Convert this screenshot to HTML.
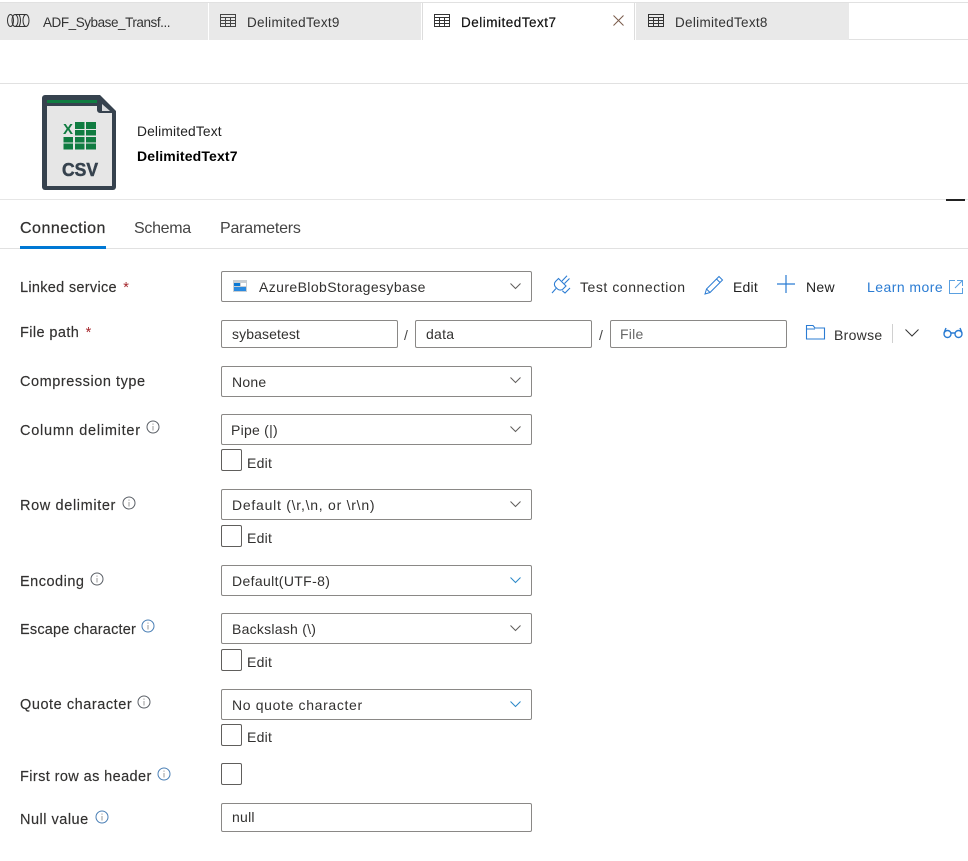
<!DOCTYPE html>
<html><head><meta charset="utf-8">
<style>
html,body{margin:0;padding:0;background:#fff}
body{width:968px;height:861px;position:relative;overflow:hidden;font-family:"Liberation Sans",sans-serif;font-size:14px;color:#262626}
.a{position:absolute;white-space:nowrap}
.l{position:absolute;left:20px;font-size:14.5px;color:#323130;white-space:nowrap;line-height:20px;-webkit-text-stroke:.15px #323130}
.b{position:absolute;box-sizing:border-box;border:1px solid #8a8886;border-radius:2px;background:#fff;height:31px;color:#323130;line-height:31px;padding-left:10px;white-space:nowrap;letter-spacing:.25px}
.c{position:absolute;box-sizing:border-box;left:221px;width:21px;height:22px;border:1px solid #605e5c;border-radius:2px}
.e{position:absolute;left:247px;color:#323130;line-height:18px;letter-spacing:.25px}
svg{position:absolute;overflow:visible}
.s{color:#a4262c;margin-left:2px;-webkit-text-stroke:0}
.t{position:absolute;top:3px;height:37px;background:#e9e9e9}
.tt{position:absolute;top:14px;line-height:18px;font-size:13.5px;color:#333;white-space:nowrap;letter-spacing:.3px}
</style></head><body>
<div class="a" style="left:0;top:2px;width:968px;height:1px;background:#e1e1e1"></div>
<div class="t" style="left:0;width:208px"></div>
<div class="t" style="left:209px;width:212px"></div>
<div class="t" style="left:422px;width:213px;background:#fff;border-left:1px solid #ddd;border-right:1px solid #ddd;box-sizing:border-box"></div>
<div class="t" style="left:636px;width:213px"></div>
<div class="a" style="left:849px;top:39px;width:119px;height:1px;background:#e1e1e1"></div>
<svg style="left:7px;top:14px" width="23" height="14" fill="none" stroke="#333" stroke-width="1"><ellipse cx="3.500" cy="6.500" rx="3" ry="6"/><ellipse cx="8" cy="6.500" rx="3" ry="6"/><path d="M8 .5H19M8 12.500H19"/><ellipse cx="19" cy="6.500" rx="3" ry="6"/><path d="M12 .5C14 4 14 9 12 12.500"/></svg>
<div class="tt" style="left:43px;letter-spacing:-.45px">ADF_Sybase_Transf...</div>
<svg style="left:220px;top:14px" width="16" height="13" fill="none" stroke="#444" stroke-width="1"><rect x=".5" y=".5" width="15" height="12"/><path d="M.5 3.500H15.500M.5 6.500H15.500M.5 9.500H15.500M5.500 3.500V12.500M10.500 3.500V12.500"/></svg>
<div class="tt" style="left:247px">DelimitedText9</div>
<svg style="left:434px;top:14px" width="16" height="13" fill="none" stroke="#333" stroke-width="1"><rect x=".5" y=".5" width="15" height="12"/><path d="M.5 3.500H15.500M.5 6.500H15.500M.5 9.500H15.500M5.500 3.500V12.500M10.500 3.500V12.500"/></svg>
<div class="tt" style="left:461px;color:#111;-webkit-text-stroke:.2px #111;letter-spacing:.5px">DelimitedText7</div>
<svg style="left:613px;top:15px" width="11" height="11" fill="none" stroke="#7a5a4a" stroke-width="1"><path d="M.5 .5L10.500 10.500M10.500 .5L.5 10.500"/></svg>
<svg style="left:648px;top:14px" width="16" height="13" fill="none" stroke="#333" stroke-width="1"><rect x=".5" y=".5" width="15" height="12"/><path d="M.5 3.500H15.500M.5 6.500H15.500M.5 9.500H15.500M5.500 3.500V12.500M10.500 3.500V12.500"/></svg>
<div class="tt" style="left:675px">DelimitedText8</div>
<div class="a" style="left:0;top:83px;width:968px;height:1px;background:#e1e1e1"></div>
<svg style="left:42px;top:95px" width="75" height="96"><path d="M3 0H58L74 16V92a3 3 0 0 1-3 3H3a3 3 0 0 1-3-3V3a3 3 0 0 1 3-3z" fill="#36424e"/><path d="M5 11H55V15a3 3 0 0 0 3 3H70V91H5z" fill="#e6e6e6"/><rect x="5" y="5" width="50" height="3" fill="#107c41"/><path d="M60 9L68 16H60z" fill="#d8dadc"/><g fill="#107c41"><rect x="33" y="27" width="9.500" height="7"/><rect x="44" y="27" width="10" height="7"/><rect x="33" y="35" width="9.500" height="5.500"/><rect x="44" y="35" width="10" height="5.500"/><rect x="21.500" y="42" width="9.500" height="5.500"/><rect x="33" y="42" width="9.500" height="5.500"/><rect x="44" y="42" width="10" height="5.500"/><rect x="21.500" y="48.500" width="9.500" height="6"/><rect x="33" y="48.500" width="9.500" height="6"/><rect x="44" y="48.500" width="10" height="6"/></g><text x="21" y="39" font-family="Liberation Sans" font-weight="700" font-size="15" fill="#107c41">X</text><text x="20" y="81" font-family="Liberation Sans" font-weight="700" font-size="18.500" textLength="36" lengthAdjust="spacingAndGlyphs" fill="#36424e" stroke="#36424e" stroke-width=".5">CSV</text></svg>
<div class="a" style="left:137px;top:124px;letter-spacing:.15px;color:#222;line-height:16px;font-size:13.800px">DelimitedText</div>
<div class="a" style="left:137px;top:148px;font-size:14px;font-weight:700;letter-spacing:.15px;color:#000;line-height:16px">DelimitedText7</div>
<div class="a" style="left:0;top:199px;width:968px;height:1px;background:#e6e6e6"></div>
<div class="a" style="left:946px;top:199px;width:19px;height:2px;background:#222"></div>
<div class="a" style="left:20px;top:219px;font-size:16px;line-height:20px;letter-spacing:.5px;color:#323130;-webkit-text-stroke:.25px #323130">Connection</div>
<div class="a" style="left:134px;top:219px;font-size:16px;line-height:20px;letter-spacing:-.3px;color:#444">Schema</div>
<div class="a" style="left:220px;top:219px;font-size:16px;line-height:20px;letter-spacing:-.2px;color:#444">Parameters</div>
<div class="a" style="left:0;top:248px;width:968px;height:1px;background:#e1e1e1"></div>
<div class="a" style="left:20px;top:246px;width:86px;height:3px;background:#0078d4"></div>

<div class="l" style="top:278px;letter-spacing:.3px">Linked service<span class="s"> *</span></div>
<div class="b" style="left:221px;top:271px;width:311px;padding-left:37px;letter-spacing:.4px">AzureBlobStoragesybase</div>
<svg style="left:233px;top:280px" width="14" height="12"><rect width="14" height="12" fill="#c8ced3"/><rect x="1" y="3" width="6" height="3" fill="#0a78d4"/><rect x="1" y="7" width="12" height="4" fill="#2a8ae0"/><rect x="8" y="3" width="5" height="3" fill="#fff"/></svg>
<svg style="left:510px;top:283px" width="11" height="7" fill="none" stroke="#605e5c"><path d="M.5 .5L5.500 5.500L10.500 .5"/></svg>

<svg style="left:551px;top:275px" width="20" height="20" fill="none" stroke="#2b7cd3" stroke-width="1.100"><path d="M7.500 3.500L15 11L12 14a4 4 0 0 1-5.500 0L4.500 12a4 4 0 0 1 0-5.500Z"/><path d="M11 6L16 .8M13.500 8.500L18.500 3.500M5 13.500L1 18M11.300 15.700L14 18L19 13"/></svg>
<div class="a" style="left:580px;top:278px;line-height:18px;letter-spacing:.55px;color:#323130">Test connection</div>
<svg style="left:704px;top:275px" width="20" height="20" fill="none" stroke="#2b7cd3"><path d="M15 1.500L18.500 5L6 17.500L1 19L2.500 14ZM12.500 4L16 7.500M2.500 14L6 17.500"/></svg>
<div class="a" style="left:733px;top:278px;line-height:18px;letter-spacing:.2px;color:#222">Edit</div>
<svg style="left:777px;top:275px" width="18" height="18" fill="none" stroke="#2b7cd3" stroke-width="1.200"><path d="M0 9H18M9 0V18"/></svg>
<div class="a" style="left:806px;top:278px;line-height:18px;letter-spacing:.3px;color:#222">New</div>
<div class="a" style="left:867px;top:278px;line-height:18px;letter-spacing:.45px;color:#2b7cd3">Learn more</div>
<svg style="left:949px;top:280px" width="14" height="14" fill="none" stroke="#5aa0e0"><path d="M6 .5H.5V13.500H13.500V8M8 .5H13.500V6M13.500 .5L6 8"/></svg>

<div class="l" style="top:323px;letter-spacing:.4px">File path<span class="s"> *</span></div>
<div class="b" style="left:221px;top:320px;width:177px;height:28px;line-height:26px;letter-spacing:.1px">sybasetest</div>
<div class="a" style="left:404px;top:326px;color:#444;line-height:18px">/</div>
<div class="b" style="left:415px;top:320px;width:177px;height:28px;line-height:26px">data</div>
<div class="a" style="left:599px;top:326px;color:#444;line-height:18px">/</div>
<div class="b" style="left:610px;top:320px;width:177px;height:28px;line-height:26px;color:#666;padding-left:9px">File</div>
<svg style="left:806px;top:325px" width="19" height="15" fill="none" stroke="#2b7cd3" stroke-width="1.100"><path d="M.5 14V.5H7L9 3H18.500V14ZM.5 4H9"/></svg>
<div class="a" style="left:834px;top:326px;line-height:18px;letter-spacing:.3px;color:#323130">Browse</div>
<div class="a" style="left:892px;top:324px;width:1px;height:19px;background:#d0d0d0"></div>
<svg style="left:905px;top:329px" width="14" height="8" fill="none" stroke="#333"><path d="M.5 .5L7 7L13.500 .5"/></svg>
<svg style="left:943px;top:326px" width="20" height="13" fill="none" stroke="#2b7cd3" stroke-width="1.400"><circle cx="4.500" cy="8" r="3.500"/><circle cx="15.500" cy="8" r="3.500"/><path d="M8 7H12M1 7L3 2M19 7L17 2"/></svg>

<div class="l" style="top:372px;letter-spacing:.55px">Compression type</div>
<div class="b" style="left:221px;top:366px;width:311px">None</div>
<svg style="left:510px;top:377px" width="11" height="7" fill="none" stroke="#605e5c"><path d="M.5 .5L5.500 5.500L10.500 .5"/></svg>

<div class="l" style="top:421px;letter-spacing:.75px">Column delimiter</div>
<svg style="left:146px;top:420px" width="14" height="14" fill="none" stroke="#5a5f66"><circle cx="7" cy="7" r="6"/><path d="M7 6V10.500M7 3.500V4.800" stroke="#999"/></svg>
<div class="b" style="left:221px;top:414px;width:311px;padding-left:9px">Pipe (|)</div>
<svg style="left:510px;top:426px" width="11" height="7" fill="none" stroke="#605e5c"><path d="M.5 .5L5.500 5.500L10.500 .5"/></svg>
<div class="c" style="top:449px"></div><div class="e" style="top:454px">Edit</div>

<div class="l" style="top:496px;letter-spacing:.63px">Row delimiter</div>
<svg style="left:122px;top:496px" width="14" height="14" fill="none" stroke="#5a5f66"><circle cx="7" cy="7" r="6"/><path d="M7 6V10.500M7 3.500V4.800" stroke="#999"/></svg>
<div class="b" style="left:221px;top:489px;width:311px;letter-spacing:.75px">Default (\r,\n, or \r\n)</div>
<svg style="left:510px;top:501px" width="11" height="7" fill="none" stroke="#605e5c"><path d="M.5 .5L5.500 5.500L10.500 .5"/></svg>
<div class="c" style="top:525px"></div><div class="e" style="top:529px">Edit</div>

<div class="l" style="top:572px;letter-spacing:.5px">Encoding</div>
<svg style="left:90px;top:572px" width="14" height="14" fill="none" stroke="#5a5f66"><circle cx="7" cy="7" r="6"/><path d="M7 6V10.500M7 3.500V4.800" stroke="#999"/></svg>
<div class="b" style="left:221px;top:565px;width:311px;letter-spacing:.35px">Default(UTF-8)</div>
<svg style="left:510px;top:577px" width="11" height="7" fill="none" stroke="#2b88c8"><path d="M.5 .5L5.500 5.500L10.500 .5"/></svg>

<div class="l" style="top:620px;letter-spacing:.2px">Escape character</div>
<svg style="left:141px;top:619px" width="14" height="14" fill="none" stroke="#4a7fb5"><circle cx="7" cy="7" r="6"/><path d="M7 6V10.500M7 3.500V4.800" stroke="#999"/></svg>
<div class="b" style="left:221px;top:613px;width:311px">Backslash (\)</div>
<svg style="left:510px;top:625px" width="11" height="7" fill="none" stroke="#605e5c"><path d="M.5 .5L5.500 5.500L10.500 .5"/></svg>
<div class="c" style="top:649px"></div><div class="e" style="top:653px">Edit</div>

<div class="l" style="top:695px;letter-spacing:.55px">Quote character</div>
<svg style="left:137px;top:695px" width="14" height="14" fill="none" stroke="#5a5f66"><circle cx="7" cy="7" r="6"/><path d="M7 6V10.500M7 3.500V4.800" stroke="#999"/></svg>
<div class="b" style="left:221px;top:689px;width:311px;letter-spacing:.65px">No quote character</div>
<svg style="left:510px;top:701px" width="11" height="7" fill="none" stroke="#2b88c8"><path d="M.5 .5L5.500 5.500L10.500 .5"/></svg>
<div class="c" style="top:724px"></div><div class="e" style="top:728px">Edit</div>

<div class="l" style="top:767px;letter-spacing:.4px">First row as header</div>
<svg style="left:157px;top:767px" width="14" height="14" fill="none" stroke="#4a7fb5"><circle cx="7" cy="7" r="6"/><path d="M7 6V10.500M7 3.500V4.800" stroke="#999"/></svg>
<div class="c" style="top:763px"></div>

<div class="l" style="top:810px;letter-spacing:.5px">Null value</div>
<svg style="left:95px;top:810px" width="14" height="14" fill="none" stroke="#4a7fb5"><circle cx="7" cy="7" r="6"/><path d="M7 6V10.500M7 3.500V4.800" stroke="#999"/></svg>
<div class="b" style="left:221px;top:803px;width:311px;height:29px;line-height:27px">null</div>
</body></html>
